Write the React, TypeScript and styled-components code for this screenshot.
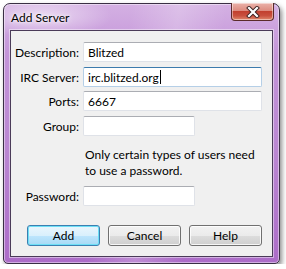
import React from "react";
import styled, { createGlobalStyle } from "styled-components";

const GlobalStyle = createGlobalStyle`
  html, body {
    margin: 0;
    padding: 0;
    background: #ffffff;
  }
  body {
    font-family: Lato, "Noto Sans", "Liberation Sans", sans-serif;
    font-size: 12px;
  }
`;

const Window = styled.div`
  box-sizing: border-box;
  margin: 3px 0 0 3px;
  width: 277px;
  height: 261px;
  border: 1px solid #3a2f44;
  border-radius: 7px 7px 5px 5px;
  padding: 0 6px 6px 6px;
  display: flex;
  flex-direction: column;
  background:
    radial-gradient(ellipse 70px 22px at 38px 12px, rgba(255, 255, 255, 0.55), rgba(255, 255, 255, 0) 100%),
    linear-gradient(100deg, rgba(255,255,255,0) 40%, rgba(255,255,255,0.22) 55%, rgba(255,255,255,0) 70%),
    linear-gradient(180deg, #d4b0e3 0%, #c394d8 20%, #b985d1 60%, #ac6cc8 100%);
  box-shadow: 2px 3px 5px rgba(0, 0, 0, 0.45), inset 0 0 0 1px rgba(255, 255, 255, 0.45);
`;

const TitleBar = styled.div`
  height: 26px;
  display: flex;
  justify-content: space-between;
  align-items: flex-start;
`;

const Title = styled.span`
  padding: 6px 0 0 1px;
  font-size: 12px;
  color: #000;
  text-shadow: 0 0 6px #fff, 0 0 3px #fff;
`;

const CloseButton = styled.div`
  box-sizing: border-box;
  width: 43px;
  height: 18px;
  margin: -1px -1px 0 0;
  border: 1px solid #5a2a2a;
  border-top: none;
  border-radius: 0 0 4px 4px;
  display: flex;
  align-items: center;
  justify-content: center;
  background: linear-gradient(180deg, #eab2aa 0%, #dd8c80 45%, #c2402f 50%, #c9503e 75%, #e08a6e 100%);
  box-shadow: inset 0 0 0 1px rgba(255, 255, 255, 0.45);
`;

const Client = styled.div`
  flex: 1;
  box-sizing: border-box;
  background: #f0f0f0;
  border: 1px solid #4a3b58;
  box-shadow: 0 0 0 1px rgba(255, 255, 255, 0.45);
  padding: 11px 0 0 0;
  display: flex;
  flex-direction: column;
`;

const FieldRow = styled.div<{ $top?: number }>`
  display: flex;
  align-items: center;
  margin-top: ${(p) => p.$top ?? 0}px;
`;

const Label = styled.label`
  width: 68px;
  text-align: right;
  margin-right: 4px;
  color: #000;
  white-space: nowrap;
`;

const Input = styled.div<{ $width: number; $focused?: boolean }>`
  box-sizing: border-box;
  width: ${(p) => p.$width}px;
  height: 20px;
  background: #fff;
  border: 1px solid ${(p) => (p.$focused ? "#b5cfe7" : "#dfe2e8")};
  border-top-color: ${(p) => (p.$focused ? "#3d7bad" : "#abadb3")};
  border-radius: 2px;
  padding: 0 4px;
  display: flex;
  align-items: center;
  color: #000;
  white-space: nowrap;
`;

const Caret = styled.span`
  display: inline-block;
  width: 1px;
  height: 14px;
  background: #000;
  margin-left: 1px;
`;

const Note = styled.p`
  margin: 11px 0 0 74px;
  line-height: 16px;
  color: #000;
`;

const ButtonRow = styled.div`
  display: flex;
  gap: 8px;
  padding-left: 16px;
  margin-top: 19px;
`;

const Button = styled.button<{ $primary?: boolean }>`
  box-sizing: border-box;
  width: 73px;
  height: 21px;
  padding: 0;
  font: inherit;
  color: #000;
  border-radius: 3px;
  border: 1px solid ${(p) => (p.$primary ? "#3c7fb1" : "#707070")};
  background: ${(p) =>
    p.$primary
      ? "linear-gradient(180deg, #eaf6fd 0%, #d9f0fc 50%, #bee6fd 50%, #a7d9f5 100%)"
      : "linear-gradient(180deg, #f2f2f2 0%, #ebebeb 50%, #dddddd 50%, #cfcfcf 100%)"};
  box-shadow: inset 0 0 0 1px ${(p) => (p.$primary ? "#6ddff6" : "rgba(255,255,255,0.8)")};
`;

const CloseIcon = () => (
  <svg width="14" height="12" viewBox="0 0 14 12">
    <path d="M3 2 L11 10 M11 2 L3 10" stroke="#3a2020" strokeWidth="4" strokeLinecap="square" />
    <path d="M3 2 L11 10 M11 2 L3 10" stroke="#ffffff" strokeWidth="2.2" strokeLinecap="square" />
  </svg>
);

export default function App() {
  return (
    <>
      <GlobalStyle />
      <Window>
        <TitleBar>
          <Title>Add Server</Title>
          <CloseButton>
            <CloseIcon />
          </CloseButton>
        </TitleBar>
        <Client>
          <FieldRow>
            <Label>Description:</Label>
            <Input $width={179}>Blitzed</Input>
          </FieldRow>
          <FieldRow $top={5}>
            <Label>IRC Server:</Label>
            <Input $width={179} $focused>
              irc.blitzed.org
              <Caret />
            </Input>
          </FieldRow>
          <FieldRow $top={4}>
            <Label>Ports:</Label>
            <Input $width={179}>6667</Input>
          </FieldRow>
          <FieldRow $top={5}>
            <Label>Group:</Label>
            <Input $width={112} />
          </FieldRow>
          <Note>
            Only certain types of users need
            <br />
            to use a password.
          </Note>
          <FieldRow $top={7}>
            <Label>Password:</Label>
            <Input $width={112} />
          </FieldRow>
          <ButtonRow>
            <Button $primary>Add</Button>
            <Button>Cancel</Button>
            <Button>Help</Button>
          </ButtonRow>
        </Client>
      </Window>
    </>
  );
}
